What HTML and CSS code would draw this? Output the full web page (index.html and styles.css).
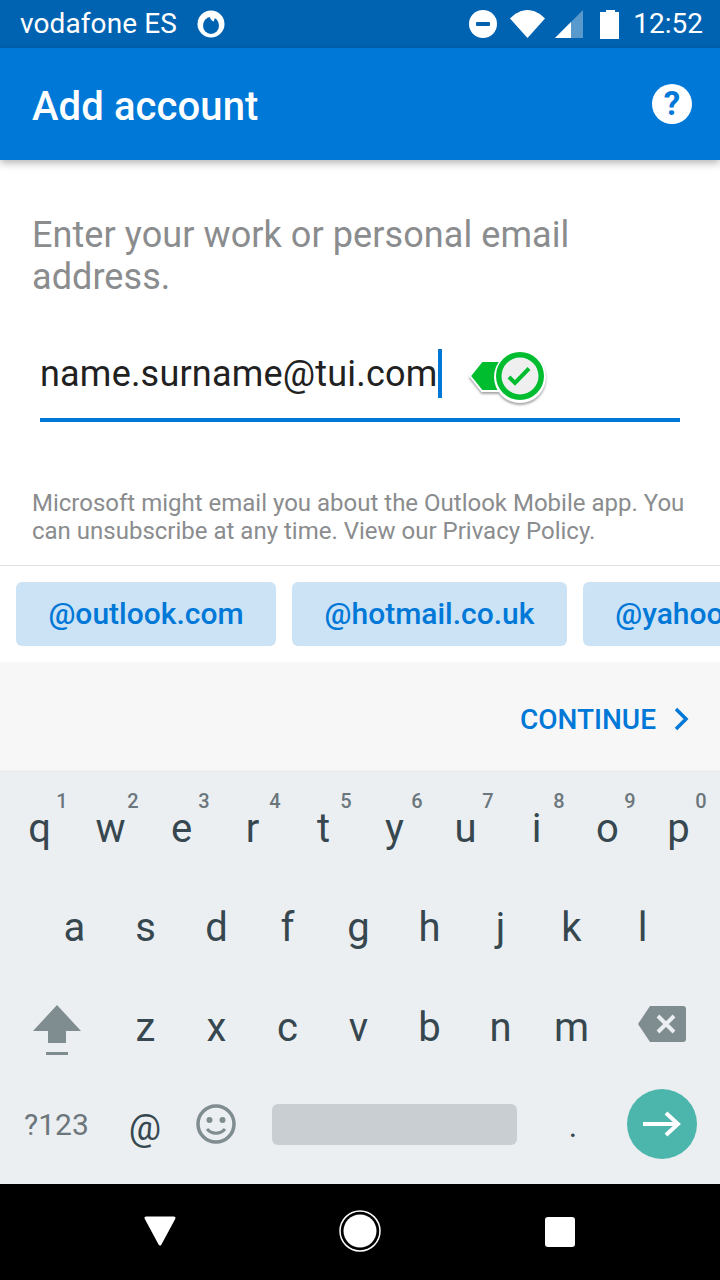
FILE: index.html
```html
<!DOCTYPE html>
<html lang="en">
<head>
<meta charset="utf-8">
<title>Add account</title>
<link rel="stylesheet" href="styles.css">
</head>
<body>
<div class="phone">
  <div class="status">
    <span class="carrier">vodafone ES</span>
    <svg class="voda" viewBox="0 0 28 28"><circle cx="14" cy="14" r="13.500" fill="#fff"/><ellipse cx="14" cy="15.500" rx="8" ry="8.500" fill="#0063B1"/><path d="M13 7.500C15 4.500 18 4 21 5.500 18.500 6.500 17 8.500 17 11.500 15 11 13.500 9.500 13 7.500z" fill="#fff"/></svg>
    <span class="spacer"></span>
    <svg class="dnd" viewBox="0 0 28 28"><circle cx="14" cy="14" r="14" fill="#fff"/><rect x="7" y="12" width="14" height="4" rx="1" fill="#0063B1"/></svg>
    <svg class="wifi" viewBox="0 0 35 28"><path d="M0 8.500C5 3.500 11 0 17.500 0S30 3.500 35 8.500L17.500 28z" fill="#fff"/></svg>
    <svg class="signal" viewBox="0 0 28 28"><path d="M0 28 28 0v28z" fill="#fff" opacity=".35"/><path d="M0 28 16 12v16z" fill="#fff"/></svg>
    <svg class="battery" viewBox="0 0 19 29"><path d="M6 0h9v2h4v27H0V2h6z" fill="#fff"/></svg>
    <span class="clock">12:52</span>
  </div>
  <header class="appbar">
    <h1 class="title">Add account</h1>
    <span class="help">?</span>
  </header>
  <main class="content">
    <p class="prompt">Enter your work or personal email address.</p>
    <div class="field">
      <span class="value">name.surname@tui.com</span><span class="caret"></span>
      <svg class="badge" viewBox="0 0 80 60">
        <path d="M1 28 13 13H36V43H13z" fill="#00BD2F" stroke="#fff" stroke-width="2"/>
        <circle cx="51" cy="29" r="26" fill="#fff"/>
        <circle cx="51" cy="28" r="24" fill="#00BD2F"/>
        <circle cx="51" cy="28" r="18.500" fill="#EFEFEF"/>
        <path d="M40 29l6 6 14-14.500" fill="none" stroke="#00BD2F" stroke-width="4"/>
      </svg>
    </div>
    <p class="notice">Microsoft might email you about the Outlook Mobile app. You can unsubscribe at any time. View our Privacy Policy.</p>
    <div class="chips">
      <span class="chip chip-a">@outlook.com</span>
      <span class="chip chip-b">@hotmail.co.uk</span>
      <span class="chip chip-c">@yahoo.com</span>
    </div>
  </main>
  <div class="actions">
    <span class="continue">CONTINUE</span>
    <svg class="chevron" viewBox="0 0 16 24"><path d="M3 2l10 10L3 22" fill="none" stroke="#0078D7" stroke-width="3.500"/></svg>
  </div>
  <section class="keyboard">
    <div class="row row-top">
      <span class="key">q<sup>1</sup></span><span class="key">w<sup>2</sup></span><span class="key">e<sup>3</sup></span><span class="key">r<sup>4</sup></span><span class="key">t<sup>5</sup></span><span class="key">y<sup>6</sup></span><span class="key">u<sup>7</sup></span><span class="key">i<sup>8</sup></span><span class="key">o<sup>9</sup></span><span class="key">p<sup>0</sup></span>
    </div>
    <div class="row row-mid">
      <span class="key">a</span><span class="key">s</span><span class="key">d</span><span class="key">f</span><span class="key">g</span><span class="key">h</span><span class="key">j</span><span class="key">k</span><span class="key">l</span>
    </div>
    <div class="row row-low">
      <span class="key key-shift"><svg class="shift" viewBox="0 0 48 50"><path d="M24 0 48 26H33V38H15V26H0z" fill="#7F8C90"/><rect x="13" y="47" width="22" height="3" fill="#7F8C90"/></svg></span>
      <span class="key">z</span><span class="key">x</span><span class="key">c</span><span class="key">v</span><span class="key">b</span><span class="key">n</span><span class="key">m</span>
      <span class="key key-back"><svg class="back" viewBox="0 0 48 36"><path d="M12 0H45a3 3 0 0 1 3 3V33a3 3 0 0 1-3 3H12L0 18z" fill="#7F8C90"/><path d="M20 10 36 26M36 10 20 26" stroke="#EBEFF2" stroke-width="4"/></svg></span>
    </div>
    <div class="row row-last">
      <span class="sym">?123</span>
      <span class="at">@</span>
      <svg class="emoji" viewBox="0 0 40 40"><circle cx="20" cy="20" r="18" fill="none" stroke="#7F8C90" stroke-width="3.500"/><circle cx="13.500" cy="16" r="3" fill="#7F8C90"/><circle cx="26.500" cy="16" r="3" fill="#7F8C90"/><path d="M11 25c4.500 5.500 13.500 5.500 18 0" fill="none" stroke="#7F8C90" stroke-width="3"/></svg>
      <span class="space"></span>
      <span class="dot">.</span>
      <span class="go"><svg viewBox="0 0 40 28"><path d="M1 14H36M24 3l12 11-12 11" fill="none" stroke="#fff" stroke-width="4"/></svg></span>
    </div>
  </section>
  <nav class="navbar">
    <svg class="nav-back" viewBox="0 0 34 30"><path d="M3 2H31L17 28z" fill="#fff" stroke="#fff" stroke-width="3" stroke-linejoin="round"/></svg>
    <svg class="nav-home" viewBox="0 0 42 42"><circle cx="21" cy="21" r="20" fill="none" stroke="#fff" stroke-width="1.500"/><circle cx="21" cy="21" r="16.500" fill="#fff"/></svg>
    <span class="nav-recent"></span>
  </nav>
</div>
</body>
</html>
```

FILE: styles.css
```css
* { box-sizing: border-box; }
html, body { margin: 0; padding: 0; }
body { background: #fff; font-family: Roboto, "Liberation Sans", sans-serif; }
.phone { width: 720px; height: 1280px; display: flex; flex-direction: column; overflow: hidden; position: relative; }

.status { height: 48px; flex: none; background: #0063B1; color: #fff; display: flex; align-items: center; padding: 0 17px 0 20px; font-size: 28px; }
.carrier { line-height: 48px; letter-spacing: .1px; }
.voda { width: 28px; height: 28px; margin-left: 20px; }
.spacer { flex: 1; }
.dnd { width: 28px; height: 28px; }
.wifi { width: 35px; height: 28px; margin-left: 13px; }
.signal { width: 28px; height: 28px; margin-left: 10px; }
.battery { width: 19px; height: 29px; margin-left: 17px; }
.clock { margin-left: 14px; line-height: 48px; }

.appbar { height: 112px; flex: none; background: #0078D7; display: flex; align-items: center; justify-content: space-between; padding: 4px 28px 0 32px; box-shadow: 0 3px 8px rgba(0,0,0,.3); position: relative; z-index: 2; }
.title { margin: 0; font-size: 40px; font-weight: 500; letter-spacing: .1px; color: #fff; }
.help { width: 40px; height: 40px; margin-top: -4px; border-radius: 50%; background: #fff; color: #0078D7; font-size: 33px; font-weight: 700; text-align: center; line-height: 40px; }

.content { height: 502px; flex: none; background: #fff; display: flex; flex-direction: column; }
.prompt { margin: 54px 0 0; padding: 0 32px; font-size: 36px; line-height: 42px; letter-spacing: .08px; color: #8A8C8E; }
.field { margin: 51px 40px 0; height: 73px; border-bottom: 4px solid #0078D7; display: flex; align-items: flex-start; position: relative; }
.value { font-size: 36px; line-height: 50px; letter-spacing: .2px; color: #212121; white-space: nowrap; }
.caret { width: 4px; height: 49px; background: #0078D7; }
.badge { width: 80px; height: 60px; margin: -1px 0 0 27px; filter: drop-shadow(0 2px 1px rgba(0,0,0,.35)); }
.notice { margin: 67px 0 0; padding: 0 20px 0 32px; height: 76px; font-size: 24px; line-height: 28px; color: #8A8C8E; }
.chips { border-top: 1px solid #E0E0E0; padding: 16px 0 0 16px; display: flex; gap: 16px; overflow: hidden; }
.chip { flex: none; height: 64px; border-radius: 6px; background: #CCE3F6; color: #0078D7; font-size: 30px; font-weight: 500; line-height: 64px; text-align: center; }
.chip-a { width: 260px; }
.chip-b { width: 275px; }
.chip-c { width: 240px; }

.actions { height: 110px; flex: none; background: #F7F7F7; display: flex; align-items: center; justify-content: flex-end; padding: 4px 31px 0 0; box-shadow: inset 0 -3px 2px -2px rgba(0,0,0,.08); }
.continue { font-size: 28px; font-weight: 500; color: #0078D7; }
.chevron { width: 16px; height: 24px; margin-left: 17px; }

.keyboard { flex: none; height: 412px; background: #EBEFF2; color: #37474F; display: flex; flex-direction: column; }
.row { display: flex; height: 100px; align-items: center; padding: 0 4px; }
.row-top { padding-top: 8px; height: 106px; }
.row-mid { height: 100px; padding-left: 3px; justify-content: center; padding-right: 6px; }
.row-low { height: 100px; padding: 0; }
.key { width: 71px; flex: none; text-align: center; font-size: 40px; line-height: 50px; position: relative; display: block; }
.key sup { position: absolute; top: -15px; right: 5px; font-size: 20px; line-height: 24px; font-weight: 500; color: #6B777C; width: 16px; }
.key-shift { width: 114px; margin-right: -4px; }
.key-back { width: 110px; }
.shift { display: block; width: 48px; height: 50px; margin: 4px auto 0; }
.back { display: block; width: 48px; height: 36px; margin: 0 auto 8px; }
.row-last { height: 106px; padding: 0 23px 14px 24px; position: relative; }
.sym { width: 65px; font-size: 30px; color: #6B777C; }
.at { font-size: 36px; margin: 7px 0 0 39px; width: 34px; text-align: center; }
.emoji { width: 40px; height: 40px; margin-left: 34px; }
.space { width: 245px; height: 41px; background: #C9CED2; border-radius: 6px; margin-left: 36px; }
.dot { width: 112px; text-align: center; font-size: 32px; margin-top: 4px; }
.go { width: 70px; height: 70px; border-radius: 50%; background: #4DB6AC; display: flex; align-items: center; justify-content: center; margin-left: -2px; }
.go svg { width: 40px; height: 28px; }

.navbar { height: 96px; flex: none; background: #000; position: relative; }
.nav-back { position: absolute; left: 143px; top: 32px; width: 34px; height: 30px; }
.nav-home { position: absolute; left: 339px; top: 26px; width: 42px; height: 42px; }
.nav-recent { position: absolute; left: 545px; top: 33px; width: 30px; height: 30px; background: #fff; border-radius: 3px; }
```
